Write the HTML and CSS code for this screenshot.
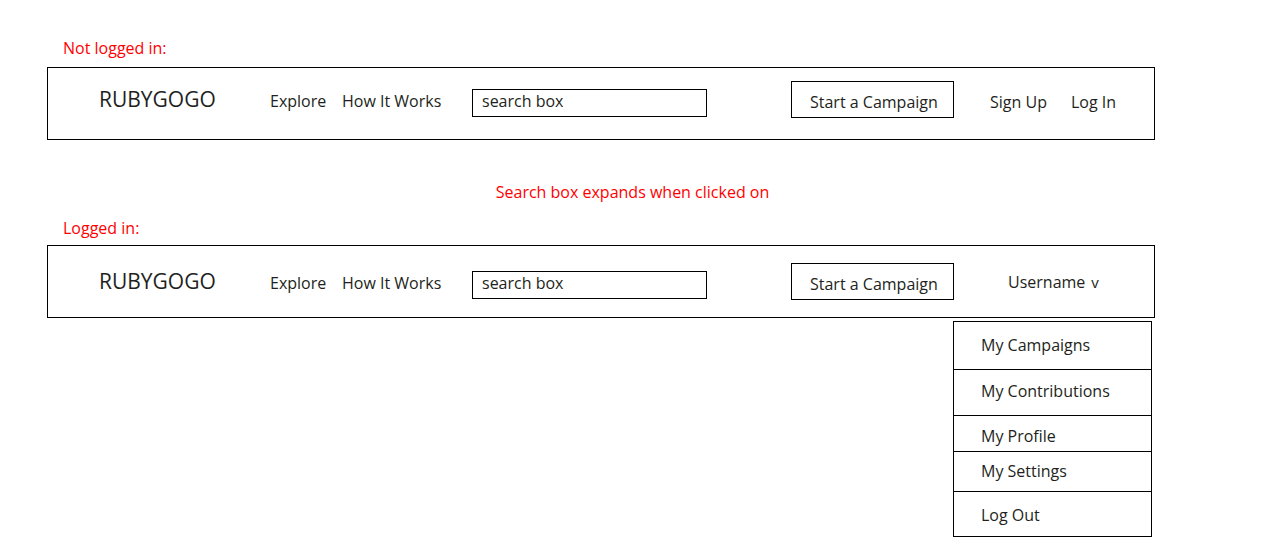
FILE: index.html
```html
<!DOCTYPE html>
<html lang="en">
<head>
<meta charset="utf-8">
<title>Rubygogo navigation wireframe</title>
<link rel="stylesheet" href="styles.css">
</head>
<body>
<main class="page">
  <p class="label label--first">Not logged in:</p>
  <nav class="navbar">
    <div class="logo">RUBYGOGO</div>
    <a class="nav-link nav-link--explore">Explore</a>
    <a class="nav-link nav-link--how">How It Works</a>
    <div class="search">search box</div>
    <div class="campaign-btn">Start a Campaign</div>
    <a class="nav-link nav-link--signup">Sign Up</a>
    <a class="nav-link nav-link--login">Log In</a>
  </nav>

  <p class="note">Search box expands when clicked on</p>

  <p class="label label--second">Logged in:</p>
  <nav class="navbar navbar--logged">
    <div class="logo">RUBYGOGO</div>
    <a class="nav-link nav-link--explore">Explore</a>
    <a class="nav-link nav-link--how">How It Works</a>
    <div class="search">search box</div>
    <div class="campaign-btn">Start a Campaign</div>
    <div class="user-menu">
      <a class="nav-link nav-link--user">Username<span class="chevron">v</span></a>
      <div class="dropdown">
        <div class="dropdown-item dropdown-item--1">My Campaigns</div>
        <div class="dropdown-item dropdown-item--2">My Contributions</div>
        <div class="dropdown-item dropdown-item--3">My Profile</div>
        <div class="dropdown-item dropdown-item--4">My Settings</div>
        <div class="dropdown-item dropdown-item--5">Log Out</div>
      </div>
    </div>
  </nav>
</main>
</body>
</html>
```

FILE: styles.css
```css
html, body {
  margin: 0;
  padding: 0;
  background: #ffffff;
}

body {
  min-height: 558px;
  font-family: "Open Sans", "Noto Sans", "Liberation Sans", sans-serif;
  font-size: 16px;
  line-height: 20px;
  color: #231f20;
}

.page {
  padding-left: 47px;
  width: 1108px;
}

.label {
  margin: 0 0 0 16px;
  color: #ff0000;
  font-size: 16px;
  line-height: 20px;
}

.label--first {
  padding-top: 38px;
}

.label--second {
  margin-top: 16px;
}

.navbar {
  box-sizing: border-box;
  height: 73px;
  border: 1px solid #000000;
  display: flex;
  align-items: flex-start;
  margin-top: 9px;
}

.label--second + .navbar {
  margin-top: 7px;
}

.navbar--logged {
  padding-top: 4px;
}

.logo {
  margin-left: 51px;
  margin-top: 17px;
  width: 171px;
  font-size: 21px;
  line-height: 28px;
  flex: none;
}

.nav-link {
  display: block;
  flex: none;
  color: #231f20;
  text-decoration: none;
  white-space: nowrap;
  margin-top: 23px;
}

.nav-link--explore {
  width: 72px;
}

.nav-link--how {
  width: 130px;
}

.search {
  flex: none;
  box-sizing: border-box;
  width: 235px;
  height: 28px;
  margin-top: 21px;
  border: 1px solid #000000;
  padding: 1px 9px 0;
  line-height: 20px;
  white-space: nowrap;
}

.campaign-btn {
  flex: none;
  box-sizing: border-box;
  width: 163px;
  height: 37px;
  margin-top: 13px;
  margin-left: 84px;
  border: 1px solid #000000;
  padding: 10px 0 0 18px;
  white-space: nowrap;
}

.nav-link--signup {
  margin-left: 36px;
  margin-top: 24px;
  width: 81px;
}

.nav-link--login {
  margin-top: 24px;
}

.user-menu {
  position: relative;
  flex: none;
  margin-left: 54px;
  margin-top: 22px;
  width: 100px;
}

.nav-link--user {
  margin-top: 0;
}

.chevron {
  font-size: 15px;
  margin-left: 6px;
}

.note {
  margin: 42px 0 0 448px;
  width: 275px;
  text-align: center;
  white-space: nowrap;
  color: #ff0000;
  line-height: 20px;
}

.dropdown {
  position: absolute;
  left: -55px;
  top: 49px;
  z-index: 10;
  box-sizing: border-box;
  width: 199px;
  border: 1px solid #000000;
  background: #ffffff;
}

.dropdown-item {
  box-sizing: border-box;
  padding-left: 27px;
  white-space: nowrap;
  border-top: 1px solid #000000;
}

.dropdown-item--1 {
  border-top: none;
  height: 47px;
  padding-top: 13px;
}

.dropdown-item--2 {
  height: 46px;
  padding-top: 11px;
}

.dropdown-item--3 {
  height: 36px;
  padding-top: 10px;
}

.dropdown-item--4 {
  height: 40px;
  padding-top: 9px;
}

.dropdown-item--5 {
  height: 45px;
  padding-top: 13px;
}
```
